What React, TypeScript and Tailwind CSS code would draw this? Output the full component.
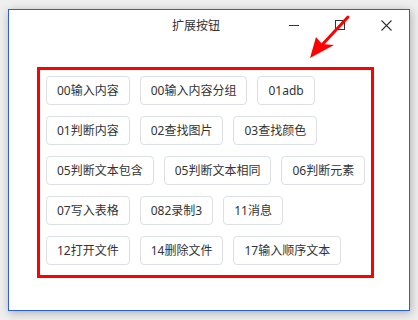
import React from 'react';

const buttons = [
  '00输入内容',
  '00输入内容分组',
  '01adb',
  '01判断内容',
  '02查找图片',
  '03查找颜色',
  '05判断文本包含',
  '05判断文本相同',
  '06判断元素',
  '07写入表格',
  '082录制3',
  '11消息',
  '12打开文件',
  '14删除文件',
  '17输入顺序文本',
];

const App: React.FC = () => {
  return (
    <div className="relative w-[418px] h-[320px] bg-[#efefef] overflow-hidden pl-[8px] pt-[9px] font-['Noto_Sans','Noto_Sans_CJK_SC',sans-serif]">
      <div className="w-[402px] h-[302px] bg-white border border-[#2b5fd6] shadow-[1px_2px_9px_rgba(0,0,0,0.28)] flex flex-col">
        {/* title bar */}
        <div className="h-[30px] flex items-center shrink-0">
          <span className="pl-[163px] text-[12px] text-[#333] leading-none pt-[1px]">扩展按钮</span>
          <div className="ml-auto flex h-full">
            <div className="w-[46px] h-full flex items-center justify-center">
              <div className="w-[10px] h-px bg-[#333]" />
            </div>
            <div className="w-[46px] h-full flex items-center justify-center">
              <div className="w-[10px] h-[10px] border border-[#333]" />
            </div>
            <div className="w-[46px] h-full flex items-center justify-center">
              <svg width="11" height="11" viewBox="0 0 11 11" className="text-[#333]">
                <path d="M0.5 0.5 L10.5 10.5 M10.5 0.5 L0.5 10.5" stroke="currentColor" strokeWidth="1.1" />
              </svg>
            </div>
          </div>
        </div>

        {/* content */}
        <div className="pl-[28px] pt-[27px]">
          <div className="w-[337px] h-[211px] border-[3px] border-[#ff0000] pl-[6px] pt-[6px] pr-0">
            <div className="flex flex-wrap gap-x-[10px] gap-y-[11px]">
              {buttons.map(label => (
                <button
                  key={label}
                  className="h-[29px] px-[10px] border border-[#dcdfe6] rounded-[4px] bg-white text-[12px] text-[#333] leading-none whitespace-nowrap"
                >
                  {label}
                </button>
              ))}
            </div>
          </div>
        </div>
      </div>

      {/* red annotation arrow */}
      <svg className="absolute left-0 top-0 pointer-events-none" width="418" height="320">
        <line x1="348" y1="17" x2="321" y2="46" stroke="#ff0000" strokeWidth="3" strokeLinecap="round" />
        <polygon points="310,58 316,37 322,44 334,45" fill="#ff0000" />
      </svg>
    </div>
  );
};

export default App;
